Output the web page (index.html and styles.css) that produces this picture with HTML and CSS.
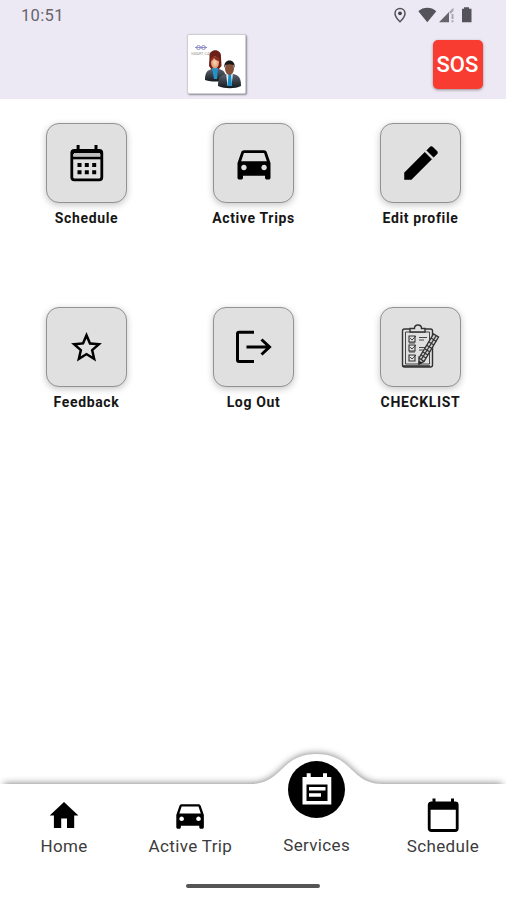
FILE: index.html
```html
<!DOCTYPE html>
<html lang="en">
<head>
<meta charset="utf-8">
<title>Services</title>
<link rel="stylesheet" href="styles.css">
</head>
<body>
<div class="app">
  <header class="header">
    <div class="status">
      <span class="time">10:51</span>
      <svg class="status-icons" width="84" height="18" viewBox="392 6 84 18">
        <path d="M400 8.500c-3.100 0-5 2.200-5 5 0 3.300 5 8.300 5 8.300s5-5 5-8.300c0-2.800-1.900-5-5-5z" fill="none" stroke="#55535a" stroke-width="1.500"/>
        <circle cx="400" cy="13.300" r="1.900" fill="#444249"/>
        <path d="M418.300 11.200c5-4.600 13-4.600 18 0L427.300 22.300z" fill="#55535a"/>
        <path d="M439 22.300L449 12v10.300z" fill="#66646b"/>
        <path d="M449 12l4.500-4.500v3.500l-3 3zM451.500 14h2v5h-2zM451.500 20.300h2v2h-2z" fill="#aaa8af"/>
        <path d="M464 8.800v-1.500h5v1.500h2.500v13.500h-9.500V8.800z" fill="#55535a"/>
      </svg>
    </div>
    <div class="brand-row">
      <div class="logo">
        <svg width="57" height="58" viewBox="0 0 57 58">
          <defs>
            <linearGradient id="suit" x1="0" y1="0" x2="0" y2="1"><stop offset="0" stop-color="#5a6470"/><stop offset="1" stop-color="#15191f"/></linearGradient>
            <radialGradient id="skin"><stop offset="0" stop-color="#ffd6b4"/><stop offset="1" stop-color="#dc9470"/></radialGradient>
          </defs>
          <g fill="none" stroke="#8f8fc9"><circle cx="10.500" cy="12.500" r="2"/><circle cx="15.500" cy="12.500" r="2"/><path d="M7 12.500h12"/></g>
          <text class="logo-text" x="3" y="19.500">SMART CAB</text>
          <path d="M21.500 22c-1-9 12.500-9 11.500 0l.5 9-3.500 4h-6l-3-4z" fill="#6d2018"/>
          <path d="M17 45c0-7 2-10 7-11l3 2 4-2c5 1 7 4 7 11-6 2-14 2-21 0z" fill="url(#suit)"/>
          <path d="M24 33h6l-1 11h-3z" fill="#2491c9"/>
          <ellipse cx="27" cy="27.500" rx="4" ry="6" fill="url(#skin)"/>
          <path d="M22.500 26c1-5 8-6 9.500 0-4 0-5-2-6-3-1 2-2 3-3.500 3z" fill="#8b3020"/>
          <path d="M30 51c0-8 2-11 8-12h7c6 1 8 4 8 12-6 3-16 3-23 0z" fill="url(#suit)"/>
          <path d="M38 38h7l-1.500 13h-4z" fill="#dceaf1"/>
          <path d="M40.500 39h2.500l1 12h-4.500z" fill="#168bc5"/>
          <ellipse cx="41.500" cy="33.500" rx="4.500" ry="6.500" fill="#85503a"/>
          <path d="M36.500 33c-2-10 12-10 10 0l-1-3c-3-1-5-1-8 0z" fill="#19191b"/>
        </svg>
      </div>
      <button class="sos">SOS</button>
    </div>
  </header>

  <main class="services">
    <div class="service">
      <div class="tile"><svg class="icon" viewBox="0 0 48 48">
        <rect x="8.800" y="11.300" width="30" height="29.500" rx="2.500" fill="none" stroke="#000" stroke-width="2.800"/>
        <path d="M8 19h31.500" stroke="#000" stroke-width="2.600"/>
        <path d="M9 11h29.500v4H9z"/><path d="M13.600 6h3v6h-3zM31.500 6h3v6h-3z"/><path d="M11 14h26v3H11z" fill="#bebebe"/>
        <path d="M14.500 24h4v4h-4zM21.800 24h4v4h-4zM29.200 24h4v4h-4zM14.500 31.200h4v4h-4zM21.800 31.200h4v4h-4zM29.200 31.200h4v4h-4z"/>
      </svg></div>
      <span class="label">Schedule</span>
    </div>
    <div class="service">
      <div class="tile"><svg class="icon car" viewBox="0 0 24 24"><path d="M18.920 6.010C18.720 5.420 18.160 5 17.500 5h-11c-.66 0-1.210.42-1.420 1.010L3 12v8c0 .55.450 1 1 1h1c.550 0 1-.45 1-1v-1h12v1c0 .55.450 1 1 1h1c.550 0 1-.45 1-1v-8l-2.080-5.990zM6.500 16c-.83 0-1.500-.67-1.500-1.500S5.670 13 6.500 13s1.500.67 1.500 1.500S7.330 16 6.500 16zm11 0c-.83 0-1.500-.67-1.500-1.500s.670-1.500 1.500-1.500 1.500.67 1.500 1.500-.670 1.500-1.500 1.500zM5 11l1.500-4.500h11L19 11H5z"/></svg></div>
      <span class="label">Active Trips</span>
    </div>
    <div class="service">
      <div class="tile"><svg class="icon pencil" viewBox="0 0 24 24"><path d="M3 17.250V21h3.750L17.810 9.940l-3.750-3.750L3 17.250zM20.710 7.040c.39-.39.390-1.020 0-1.410l-2.340-2.340c-.39-.39-1.020-.39-1.410 0l-1.830 1.830 3.750 3.750 1.830-1.830z" stroke="#000" stroke-width=".3"/></svg></div>
      <span class="label">Edit profile</span>
    </div>
    <div class="service">
      <div class="tile"><svg class="icon star" viewBox="0 0 24 24"><path d="M22 9.240l-7.190-.62L12 2 9.190 8.630 2 9.240l5.460 4.730L5.820 21 12 17.270 18.180 21l-1.630-7.030L22 9.240zM12 15.400l-3.760 2.270 1-4.280-3.320-2.880 4.380-.38L12 6.100l1.710 4.040 4.380.38-3.320 2.880 1 4.280L12 15.400z"/></svg></div>
      <span class="label">Feedback</span>
    </div>
    <div class="service">
      <div class="tile"><svg class="icon" viewBox="0 0 48 48"><path d="M24 9.300H9Q7.500 9.300 7.500 10.800V37Q7.500 38.500 9 38.500H24M16.500 24H40M31.500 16.500L39.500 24L31.500 31.500" fill="none" stroke="#000" stroke-width="3"/></svg></div>
      <span class="label">Log Out</span>
    </div>
    <div class="service">
      <div class="tile"><svg class="icon" viewBox="0 0 48 48" fill="none" stroke="#333" stroke-width=".9">
        <rect x="5.500" y="6" width="30" height="38" rx="2" stroke-width="1.400"/>
        <path d="M8.500 9h24v32h-24z"/>
        <path d="M13 9V5.500h4.500q0-3.500 3.500-3.500t3.500 3.500H28V9z" fill="#e0e0e0" stroke-width="1.400"/>
        <path d="M12 13h6v6h-6zM12 22h6v6h-6zM12 32h6v6h-6z" stroke-width="1.100"/>
        <path d="M13 15l2 2 4-4M13 24l2 2 4-4M13 34l2 2 4-4M12 20h6M12 29h6M22 14.500h8M22 17h5M22 24.500h6M22 27h4M21 34h4"/>
        <path d="M22 35L36.500 11l5 3L27 38.500l-5 2.500z" fill="#d2d2d2" stroke-width="1.400"/>
        <path d="M24.500 36L39 13M22 35l5 3.500M24 32l5 3M26 29l5 3M28 26l5 3M30 22.500l5 3M32 19l5 3M34 15l5.500 3.500" stroke-width="1.300"/>
        <path d="M22 38v3l3-1z" fill="#111"/><path d="M6 43h27" stroke-width="1.600"/>
      </svg></div>
      <span class="label">CHECKLIST</span>
    </div>
  </main>

  <footer class="footer">
    <svg class="nav-shape" width="506" height="160" viewBox="0 0 506 160">
      <defs><filter id="soft" x="-10%" y="-20%" width="120%" height="140%"><feGaussianBlur stdDeviation="3.500"/></filter></defs>
      <path class="shadow" filter="url(#soft)" d="M4 43.500H250C283 43.500 280 13.500 316.500 13.500S350 43.500 383 43.500H502V150H4z"/>
      <path fill="#fff" d="M0 44H250C283 44 280 14 316.500 14S350 44 383 44H506V160H0z"/>
    </svg>
    <nav class="nav">
      <a class="nav-item"><svg class="nav-icon" viewBox="0 0 36 36"><path d="M15.200 31V21.500h5.800V31h7.200V18.500h4.200L18 5 3.700 18.500h4.200V31z"/></svg><span>Home</span></a>
      <a class="nav-item"><svg class="nav-icon" viewBox="-.300 .300 23.500 23.500"><path transform="translate(-.5)" d="M18.920 6.010C18.720 5.420 18.160 5 17.500 5h-11c-.66 0-1.210.42-1.420 1.010L3 12v8c0 .55.450 1 1 1h1c.550 0 1-.45 1-1v-1h12v1c0 .55.450 1 1 1h1c.550 0 1-.45 1-1v-8l-2.080-5.990zM6.500 16c-.83 0-1.500-.67-1.500-1.500S5.670 13 6.500 13s1.500.67 1.500 1.500S7.330 16 6.500 16zm11 0c-.83 0-1.500-.67-1.500-1.500s.670-1.500 1.500-1.500 1.500.67 1.500 1.500-.670 1.500-1.500 1.500zM5 11l1.500-4.500h11L19 11H5z"/></svg><span>Active Trip</span></a>
      <a class="nav-item active"><span class="bubble"><svg width="56" height="56" viewBox="0 0 56 56"><path fill="#fff" d="M13.500 15h4.200v-3.800h4V15H34v-3.800h4V15h4.300v27.500H13.500z"/><path d="M17.500 22.500h21V39h-21z"/><path fill="#fff" d="M20 25h16.500v3.500H20zM20 31.300h12v3.500H20z"/></svg></span><span>Services</span></a>
      <a class="nav-item"><svg class="nav-icon" viewBox="0 0 36 36"><rect x="4.200" y="6" width="28" height="27.500" rx="2" fill="none" stroke="#000" stroke-width="2.800"/><path d="M4 5.800h28.500v7H4zM7.500 1.500h3v5h-3zM26 1.500h3v5h-3z"/></svg><span>Schedule</span></a>
    </nav>
    <div class="home-indicator"></div>
  </footer>
</div>
</body>
</html>
```
FILE: styles.css
```css
* { box-sizing: border-box; }
body { margin: 0; background: #fff; font-family: Roboto, "Liberation Sans", sans-serif; }
.app { width: 506px; height: 900px; display: flex; flex-direction: column; overflow: hidden; }
.header { height: 99px; background: #ece9f4; flex: none; }
.status { height: 34px; display: flex; justify-content: space-between; padding: 6px 30px 0 21px; }
.time { font-size: 16.5px; line-height: 19px; color: #65636a; letter-spacing: .35px; }
.brand-row { display: grid; grid-template-columns: 187px 59px 1fr; align-items: start; }
.logo { grid-column: 2; width: 59px; height: 60px; background: #fff; border: 1px solid #cfcdd4; border-radius: 2px; box-shadow: 1px 1px 2px #8b8991; }
.logo svg { display: block; }
.logo-text { font-size: 3.8px; fill: #999; }
.sos { justify-self: end; margin: 6px 23.5px 0 0; width: 50px; height: 49px; padding: 0; border: 0; border-radius: 5px; background: #f83c31; color: #fff; font: 500 22px/48px Roboto, sans-serif; letter-spacing: .1px; box-shadow: 0 1px 3px #99888c; }
.services { flex: 1; display: grid; grid-template-columns: repeat(3, 167px); grid-auto-rows: 184px; padding: 24px 0 0 3px; }
.service { display: flex; flex-direction: column; align-items: center; }
.tile { width: 81px; height: 80px; border: 1px solid #929292; border-radius: 13px; background: #e0e0e0; display: flex; align-items: center; justify-content: center; box-shadow: 0 2px 7px rgba(0,0,0,.23); }
.icon { width: 48px; height: 48px; display: block; }
.car { width: 44px; height: 44px; }
.pencil { width: 44px; height: 44px; }
.star { width: 37px; height: 37px; }
.label { margin-top: 7px; font-size: 14px; line-height: 17px; font-weight: 700; color: #161616; letter-spacing: .65px; white-space: nowrap; }
.footer { height: 160px; flex: none; position: relative; }
.nav-shape { position: absolute; inset: 0; }
.shadow { fill: rgba(0,0,0,.5); }
.nav { position: relative; display: grid; grid-template-columns: repeat(4, 1fr); height: 144px; padding: 57px 0 0 1px; }
.nav-item { display: flex; flex-direction: column; align-items: center; font-size: 17px; line-height: 20px; letter-spacing: .35px; color: #3c3c3c; gap: 3px; white-space: nowrap; }
.nav-icon { width: 36px; height: 36px; fill: #000; display: block; }
.active { margin-top: -36px; gap: 17px; }
.bubble { width: 57px; height: 57px; border-radius: 50%; background: #000; display: grid; place-items: center; }
.home-indicator { position: relative; width: 134px; height: 4px; margin: 0 auto; border-radius: 2px; background: #555; }
```
